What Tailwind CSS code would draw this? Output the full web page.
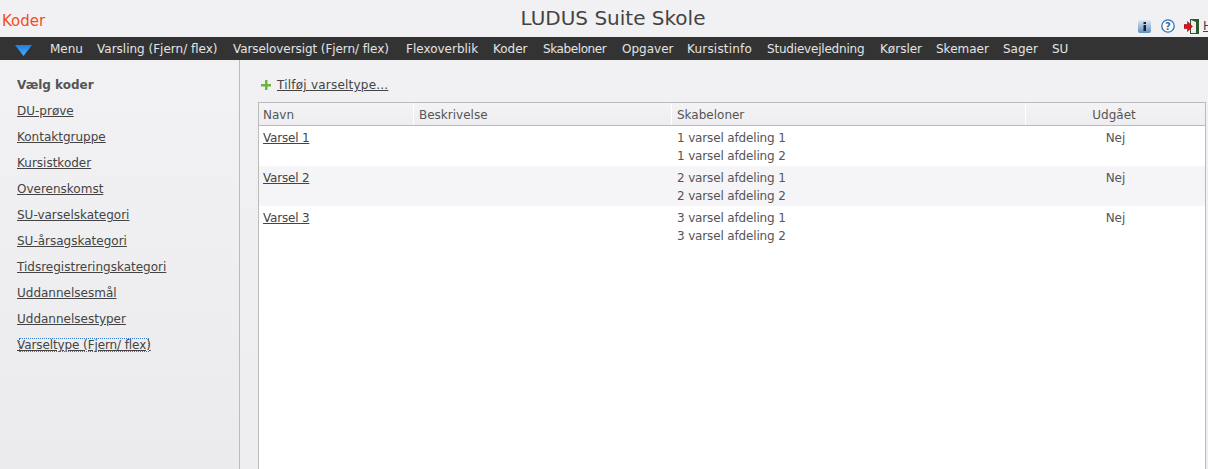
<!DOCTYPE html>
<html lang="da">
<head>
<meta charset="UTF-8">
<title>LUDUS Suite Skole</title>
<script src="https://cdn.jsdelivr.net/npm/@tailwindcss/browser@4"></script>
</head>
<body class="h-[469px] w-[1208px] overflow-hidden bg-[#f1f1f3] font-['DejaVu_Sans',sans-serif] text-[12px] leading-[18px] text-[#555]">
  <header class="relative h-[37px]">
    <span class="absolute left-[2px] top-[10px] text-[15px] leading-[22px] text-[#f04e23]">Koder</span>
    <h1 class="pl-[18px] pt-[4px] text-center text-[20px] leading-[28px] text-[#444]">LUDUS Suite Skole</h1>
    <div class="absolute left-[1138px] top-[17px] flex items-center">
      <svg class="h-[13px] w-[13px]" viewBox="0 0 13 13">
        <defs><linearGradient id="infoBg" x1="0" y1="0" x2="0" y2="1"><stop offset="0" stop-color="#dfe8f2"/><stop offset="1" stop-color="#5f8fbd"/></linearGradient></defs>
        <rect width="13" height="13" rx="2" fill="url(#infoBg)"/><rect x="5.500" y="2" width="2.500" height="2" fill="#123"/><rect x="5.500" y="5" width="2.500" height="6" fill="#123"/>
      </svg>
      <svg class="ml-[10px] h-[14px] w-[14px]" viewBox="0 0 14 14"><circle cx="7" cy="7" r="6.200" fill="#fff" stroke="#2f6fb0" stroke-width="1.300"/><text x="7" y="10.500" text-anchor="middle" font-size="10" font-weight="bold" fill="#2f6fb0">?</text></svg>
      <svg class="ml-[9px] h-[15px] w-[15px]" viewBox="0 0 15 15"><rect x="6" y="0" width="9" height="15" fill="#2d5a2d"/><path d="M7 1l5 2v11H7z" fill="#eee"/><path d="M0 5.500h3.500V2.500l5 5-5 5V9.500H0z" fill="#e01020" stroke="#700" stroke-width=".5"/></svg>
      <a class="ml-[4px] text-[#444] underline">H</a>
    </div>
  </header>

  <nav class="flex h-[23px] items-center bg-[#333] text-[#e4e4e4]">
    <svg class="ml-[15px] mt-[4px] h-[11px] w-[17px]" viewBox="0 0 17 11">
      <defs><linearGradient id="menuArrow" x1="0" y1="0" x2="0" y2="1"><stop offset="0" stop-color="#1f7fe0"/><stop offset="1" stop-color="#4ab0ff"/></linearGradient></defs>
      <path d="M0 0h17l-8.500 11z" fill="url(#menuArrow)"/>
    </svg>
    <ul class="ml-[18px] flex whitespace-nowrap">
      <li class="w-[47px]">Menu</li>
      <li class="w-[136px]">Varsling (Fjern/ flex)</li>
      <li class="w-[173px] tracking-[-0.08px]">Varseloversigt (Fjern/ flex)</li>
      <li class="w-[87px]">Flexoverblik</li>
      <li class="w-[50px]">Koder</li>
      <li class="w-[79px] tracking-[-0.4px]">Skabeloner</li>
      <li class="w-[65px]">Opgaver</li>
      <li class="w-[80px] tracking-[0.2px]">Kursistinfo</li>
      <li class="w-[113px] tracking-[-0.2px]">Studievejledning</li>
      <li class="w-[56px]">Kørsler</li>
      <li class="w-[67px]">Skemaer</li>
      <li class="w-[49px]">Sager</li>
      <li>SU</li>
    </ul>
  </nav>

  <div class="flex h-[409px]">
    <aside class="w-[240px] shrink-0 border-r border-[#bbb] bg-gradient-to-b from-[#f2f2f4] to-[#ebebed] pl-[17px] pt-[16px]">
      <h2 class="mb-[8px] font-bold">Vælg koder</h2>
      <ul class="flex flex-col gap-[8px] text-[#444]">
        <li><a class="underline">DU-prøve</a></li>
        <li><a class="underline">Kontaktgruppe</a></li>
        <li><a class="underline">Kursistkoder</a></li>
        <li><a class="underline">Overenskomst</a></li>
        <li><a class="underline">SU-varselskategori</a></li>
        <li><a class="underline">SU-årsagskategori</a></li>
        <li><a class="underline">Tidsregistreringskategori</a></li>
        <li><a class="underline">Uddannelsesmål</a></li>
        <li><a class="underline">Uddannelsestyper</a></li>
        <li>
          <a class="relative inline-block tracking-[-0.1px] underline">Varseltype (Fjern/ flex)<span class="absolute inset-x-[2px] inset-y-[2px] border border-dotted border-[#3a78c8]"></span></a>
        </li>
      </ul>
    </aside>
    <main class="min-w-0 flex-1 bg-gradient-to-b from-[#f1f1f3] to-[#eeeef0] pl-[18px] pr-[2px] pt-[16px]">
      <div class="flex h-[18px] items-center pl-[3px]">
        <svg class="h-[10px] w-[10px]" viewBox="0 0 10 10"><path d="M4 0h2.500v4H10v2.500H6.500V10H4V6.500H0V4h4z" fill="#6db33f"/></svg>
        <a class="ml-[6px] tracking-[0.22px] text-[#444] underline">Tilføj varseltype...</a>
      </div>
      <div class="mt-[8px] h-[367px] border-x border-t border-[#bbb] bg-white">
        <div class="flex h-[23px] border-b border-[#bbb] bg-gradient-to-b from-[#f3f3f5] to-[#eeeef0] leading-[24px]">
          <div class="w-[155px] border-r border-white pl-[4px]">Navn</div>
          <div class="w-[258px] border-r border-white pl-[5px]">Beskrivelse</div>
          <div class="w-[354px] border-r border-white pl-[5px]">Skabeloner</div>
          <div class="flex-1 pr-[3px] text-center">Udgået</div>
        </div>
        <div class="flex h-[40px] pt-[3px]">
          <div class="w-[413px] pl-[4px]"><a class="tracking-[-0.2px] text-[#444] underline">Varsel 1</a></div>
          <div class="w-[354px] pl-[5px] tracking-[-0.15px]">1 varsel afdeling 1<br>1 varsel afdeling 2</div>
          <div class="flex-1 text-center">Nej</div>
        </div>
        <div class="flex h-[40px] bg-[#f5f5f7] pt-[3px]">
          <div class="w-[413px] pl-[4px]"><a class="tracking-[-0.2px] text-[#444] underline">Varsel 2</a></div>
          <div class="w-[354px] pl-[5px] tracking-[-0.15px]">2 varsel afdeling 1<br>2 varsel afdeling 2</div>
          <div class="flex-1 text-center">Nej</div>
        </div>
        <div class="flex h-[40px] pt-[3px]">
          <div class="w-[413px] pl-[4px]"><a class="tracking-[-0.2px] text-[#444] underline">Varsel 3</a></div>
          <div class="w-[354px] pl-[5px] tracking-[-0.15px]">3 varsel afdeling 1<br>3 varsel afdeling 2</div>
          <div class="flex-1 text-center">Nej</div>
        </div>
      </div>
    </main>
  </div>
</body>
</html>
